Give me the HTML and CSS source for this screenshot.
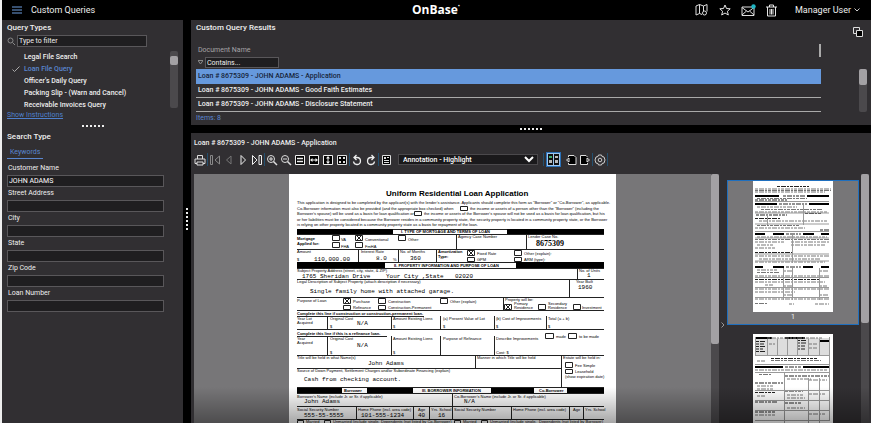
FILE: index.html
```
<!DOCTYPE html>
<html lang="en">
<head>
    <meta charset="UTF-8">
    <meta name="viewport" content="width=device-width, initial-scale=1.0">
    <title>OnBase - Custom Queries</title>
    <link rel="stylesheet" href="styles.css">
</head>
<body>
    <header class="topbar">
        <div class="topbar-left">
            <button class="icon-btn menu-btn" aria-label="Menu">
                <svg width="10" height="8" viewBox="0 0 10 8" stroke="#6f9fe0"><path d="M0 1h10M0 4h10M0 7h10"/></svg>
            </button>
            <span class="page-name">Custom Queries</span>
        </div>
        <h1 class="logo">OnBase<sup>·</sup></h1>
        <div class="topbar-right">
            <button class="icon-btn" aria-label="Map">
                <svg width="14" height="14" viewBox="0 0 14 14" fill="none" stroke="#ddd"><path d="M1 3l3.500-1.500 4 1.500L12 1.500v7M1 3v9l3.500-1.500L7 11.500M4.500 1.500v9M8.500 3v5"/><circle cx="9.500" cy="10" r="2"/></svg>
            </button>
            <button class="icon-btn" aria-label="Favorites">
                <svg width="12" height="12" viewBox="0 0 12 12" fill="none" stroke="#e6e6e6"><path d="M6 1l1.500 3.500 3.700.3-2.800 2.500.9 3.700L6 9l-3.300 2 .9-3.700L.8 4.800l3.700-.3z"/></svg>
            </button>
            <button class="icon-btn" aria-label="Mail">
                <svg width="15" height="13" viewBox="0 0 15 13" fill="none" stroke="#ddd"><path d="M1 3h12v8.500H1zM1 3.500l6 4.500 6-4.500M1 11l4.500-4M13 11L8.500 7"/><circle cx="12.500" cy="2.500" r="2.200" fill="#1fb5c4" stroke="none"/></svg>
            </button>
            <button class="icon-btn" aria-label="Trash">
                <svg width="11" height="13" viewBox="0 0 11 13" fill="none" stroke="#e6e6e6"><path d="M0 3h11M3.500 3V1h4v2M1.500 3v9h8V3M4 5v5.500M5.500 5v5.500M7 5v5.500"/></svg>
            </button>
            <button class="user-btn">Manager User
                <svg width="6" height="4" viewBox="0 0 6 4" fill="none" stroke="#ccc"><path d="M.5.5L3 3 5.500.5"/></svg>
            </button>
        </div>
    </header>

    <div class="workspace">
        <aside class="sidebar">
            <h2 class="heading">Query Types</h2>
            <div class="filter">
                <svg width="8" height="9" viewBox="0 0 8 9" fill="none" stroke="#888"><circle cx="3.500" cy="3.500" r="2.500"/><path d="M5.500 5.500L8 8"/></svg>
                <input class="field" type="text" aria-label="Filter query types" placeholder="Type to filter">
            </div>
            <div class="query-box">
                <ul class="query-list">
                    <li>Legal File Search</li>
                    <li class="selected">
                        <svg class="check" width="8" height="7" viewBox="0 0 8 7" fill="none" stroke="#aaa"><path d="M.5 3.500l2 2L7.500.5"/></svg>Loan File Query</li>
                    <li>Officer's Daily Query</li>
                    <li>Packing Slip - (Warn and Cancel)</li>
                    <li>Receivable Invoices Query</li>
                </ul>
                <div class="scroll query-scroll"><div class="thumb"></div></div>
            </div>
            <a class="instructions" href="#">Show Instructions</a>
            <div class="grip"></div>
            <h2 class="heading">Search Type</h2>
            <nav class="tabs"><a class="tab" href="#">Keywords</a></nav>
            <form class="keywords">
                <label for="customer">Customer Name</label>
                <input class="field" id="customer" type="text" value="JOHN ADAMS">
                <label for="street">Street Address</label>
                <input class="field" id="street" type="text">
                <label for="city">City</label>
                <input class="field" id="city" type="text">
                <label for="state">State</label>
                <input class="field" id="state" type="text">
                <label for="zip">Zip Code</label>
                <input class="field" id="zip" type="text">
                <label for="loan">Loan Number</label>
                <input class="field" id="loan" type="text">
            </form>
        </aside>

        <div class="divider"><div class="grip vertical"></div></div>

        <main class="content">
            <section class="results">
                <div class="results-head">
                    <h2 class="heading">Custom Query Results</h2>
                    <button class="icon-btn" aria-label="Open in window">
                        <svg width="10" height="10" viewBox="0 0 10 10" stroke="#ddd"><path d="M.5.500h6v6h-6z" fill="none"/><path d="M3.500 3.500h6v6h-6z" fill="#000"/></svg>
                    </button>
                </div>
                <div class="results-body">
                    <div class="results-main">
                        <div class="column-head">
                            <span>Document Name</span>
                            <span class="column-edge"></span>
                        </div>
                        <div class="column-filter">
                            <svg width="5" height="5" viewBox="0 0 5 5" fill="none" stroke="#888"><path d="M0 .5h5L2.500 4z"/></svg>
                            <input class="field" type="text" aria-label="Filter document name" placeholder="Contains...">
                        </div>
                        <table class="docs">
                            <tbody>
                                <tr class="active"><td>Loan # 8675309 - JOHN ADAMS - Application</td></tr>
                                <tr><td>Loan # 8675309 - JOHN ADAMS - Good Faith Estimates</td></tr>
                                <tr><td>Loan # 8675309 - JOHN ADAMS - Disclosure Statement</td></tr>
                            </tbody>
                        </table>
                    </div>
                    <div class="scroll docs-scroll"><div class="thumb"></div></div>
                </div>
                <div class="count">Items: 8</div>
            </section>

            <div class="splitter"><div class="grip"></div></div>

            <section class="document">
                <h2 class="doc-title">Loan # 8675309 - JOHN ADAMS - Application</h2>
                <div class="toolbar">
                    <button class="icon-btn" aria-label="Print"><svg width="12" height="12" viewBox="0 0 12 12" fill="none" stroke="#ddd"><path d="M3.500 5V1.500h5V5M1 5h10v4.500H9M3 9.500H1V5M3 8h6v3H3z"/></svg></button>
                    <span class="sep"></span>
                    <button class="icon-btn dim" aria-label="First page"><svg width="12" height="12" viewBox="0 0 12 12" fill="none" stroke="#888"><path d="M1.500 1.500h2v9h-2zM10.500 2L6 6l4.500 4z"/></svg></button>
                    <button class="icon-btn dim" aria-label="Previous page"><svg width="12" height="12" viewBox="0 0 12 12" fill="none" stroke="#777"><path d="M8 2L3.500 6 8 10z"/></svg></button>
                    <button class="icon-btn" aria-label="Next page"><svg width="12" height="12" viewBox="0 0 12 12" fill="none" stroke="#eee"><path d="M4 1.500L8.500 6 4 10.500z"/></svg></button>
                    <button class="icon-btn" aria-label="Last page"><svg width="12" height="12" viewBox="0 0 12 12" fill="none" stroke="#eee"><path d="M1.500 1.500L6 6l-4.500 4.500zM8 1.500h2.500v9H8z"/></svg></button>
                    <span class="sep"></span>
                    <button class="icon-btn" aria-label="Zoom in"><svg width="12" height="12" viewBox="0 0 12 12" fill="none" stroke="#ddd"><circle cx="5" cy="5" r="3.500"/><path d="M3 5h4M5 3v4"/><path d="M7.500 7.500L11 11" stroke-width="1.500"/></svg></button>
                    <button class="icon-btn" aria-label="Zoom out"><svg width="12" height="12" viewBox="0 0 12 12" fill="none" stroke="#ddd"><circle cx="5" cy="5" r="3.500"/><path d="M3 5h4"/><path d="M7.500 7.500L11 11" stroke-width="1.500"/></svg></button>
                    <button class="icon-btn" aria-label="Actual size"><svg width="12" height="12" viewBox="0 0 12 12" fill="#000" stroke="#eee"><path d="M1.500 1.500h9v9h-9z"/><path d="M3 4.500h6M3 7.500h6" stroke-width="1.500"/></svg></button>
                    <button class="icon-btn" aria-label="Fit width"><svg width="12" height="12" viewBox="0 0 12 12" fill="#000" stroke="#eee"><path d="M1.500 1.500h9v9h-9zM3 6h6"/><path d="M2 6l2.500-2v4zM10 6L7.500 4v4z" fill="#eee" stroke="none"/></svg></button>
                    <button class="icon-btn" aria-label="Fit height"><svg width="12" height="12" viewBox="0 0 12 12" fill="#000" stroke="#eee"><path d="M1.500 1.500h9v9h-9zM6 3v6"/><path d="M6 2l2 2.500H4zM6 10l2-2.500H4z" fill="#eee" stroke="none"/></svg></button>
                    <button class="icon-btn" aria-label="Fit window"><svg width="12" height="12" viewBox="0 0 12 12" fill="#000" stroke="#ddd"><path d="M1.500 1.500h9v9h-9z"/><path d="M3 3h2v2H3zM7 3h2v2H7zM3 7h2v2H3zM7 7h2v2H7z" fill="#ddd" stroke="none"/></svg></button>
                    <span class="sep"></span>
                    <button class="icon-btn" aria-label="Rotate left"><svg width="12" height="12" viewBox="0 0 12 12" fill="none" stroke="#eee" stroke-width="1.300"><path d="M3 3.500h3a3.500 3.500 0 1 1-3.500 4M5.500 1L3 3.500 5.500 6"/></svg></button>
                    <button class="icon-btn" aria-label="Rotate right"><svg width="12" height="12" viewBox="0 0 12 12" fill="none" stroke="#eee" stroke-width="1.300"><path d="M9 3.500H6a3.500 3.500 0 1 0 3.500 4M6.500 1L9 3.500 6.500 6"/></svg></button>
                    <span class="sep"></span>
                    <button class="icon-btn" aria-label="Notes"><svg width="12" height="12" viewBox="0 0 12 12" fill="#000" stroke="#ddd"><path d="M2.500 1.500h8v9h-8zM4 6.500h5M4 8.500h5M7 3.500h2"/><path d="M4 3h2v2H4z" fill="#ddd" stroke="none"/></svg></button>
                    <select class="annotation" aria-label="Annotation type">
                        <option>Annotation - Highlight</option>
                    </select>
                    <span class="sep"></span>
                    <button class="icon-btn pressed" aria-label="Thumbnails"><svg width="11" height="11" viewBox="0 0 11 11" fill="#111"><path d="M0 0h5v11H0zM6 0h5v11H6z"/><path d="M1 2h3v2H1z" fill="#3fae6a"/><path d="M1 6h3v3H1zM7 2h3v2H7zM7 6h3v3H7z" fill="#bbb"/></svg></button>
                    <button class="icon-btn" aria-label="Previous document"><svg width="12" height="12" viewBox="0 0 12 12" fill="#000" stroke="#ddd"><path d="M3.500 3V1.500H9l2 2v7H3.500V9M4 4L1.500 6 4 8z"/></svg></button>
                    <button class="icon-btn" aria-label="Next document"><svg width="12" height="12" viewBox="0 0 12 12" fill="#000" stroke="#ddd"><path d="M8.500 3L7 1.500H1.500v9h7V9M8 4l2.500 2L8 8z"/></svg></button>
                    <span class="sep"></span>
                    <button class="icon-btn" aria-label="Settings"><svg width="12" height="12" viewBox="0 0 12 12" fill="none" stroke="#ccc"><path d="M4.500 1h3l.5 1.500 2 .5 1 3-1 3-2 .5-.5 1.500h-3L4 9.500 2 9 1 6l1-3 2-.5z"/><circle cx="6" cy="6" r="1.800"/></svg></button>
                    <span class="sep"></span>
                </div>

                <div class="viewer">
                    <div class="canvas">
                        <!-- Scanned loan application, page 1 -->
                        <svg class="scan" width="327" height="249" viewBox="0 0 327 249" role="img" aria-label="Uniform Residential Loan Application">
                            <rect width="327" height="249" fill="#fff"/>
                            <g class="rules">
                                <path d="M8 55.500h307M8 60.500h307M8 75.500h307M8 88.500h307M8 94.500h307M8 105.500h307M8 123.500h307M8 136.500h307M8 142.500h127M8 155.500h307M8 162.500h90M8 181.500h307M8 194.500h264M8 213.500h307M8 219.500h307M8 232.500h307M8 245.500h307"/>
                                <path d="M167.500 60v15M237.500 60v15M69.500 76v12M109.500 76v12M147.500 76v12M288.500 94v11M280.500 105v18M214.500 123v13M38.500 142v13M102.500 142v13M151.500 142v13M205.500 142v13M257.500 142v13M38.500 162v19M102.500 162v19M151.500 162v19M205.500 162v19M186.500 181v13M272.500 181v32M163.500 219v26M67.500 232v13M124.500 232v13M140.500 232v13M222.500 232v13M280.500 232v13M294.500 232v13"/>
                            </g>
                            <path d="M8 55h96v5H8zM218 55h97v5h-97zM8 88h88v6H8zM227 88h88v6h-88zM8 214h45v5H8zM78 214h46v5H78zM202 214h43v5h-43zM278 214h37v5h-37z"/>
                            <g class="boxes">
                                <path d="M43.500 61.500h7v5h-7zM43.500 68.500h7v5h-7zM66.500 61.500h7v5h-7zM66.500 68.500h7v5h-7zM109.500 61.500h7v5h-7zM171.500 32.500h7v4h-7zM125.500 37.500h7v4h-7z"/>
                                <path d="M178.500 76.500h7v5h-7zM178.500 83.500h7v4h-7zM225.500 76.500h7v5h-7zM225.500 83.500h7v4h-7z"/>
                                <path d="M54.500 124.500h7v5h-7zM54.500 131.500h7v4h-7zM89.500 124.500h7v5h-7zM89.500 131.500h7v4h-7zM151.500 124.500h7v5h-7zM215.500 130.500h7v5h-7zM249.500 130.500h7v5h-7zM284.500 130.500h7v5h-7z"/>
                                <path d="M256.500 159.500h8v5h-8zM279.500 159.500h8v5h-8zM276.500 188.500h7v5h-7zM276.500 195.500h7v4h-7zM8.500 246.500h6v5h-6zM35.500 246.500h6v5h-6zM165.500 246.500h6v5h-6zM192.500 246.500h6v5h-6z"/>
                                <path d="M68 62l4 4M72 62l-4 4M180 77l4 4M184 77l-4 4M56 125l4 4M60 125l-4 4M217 131l4 4M221 131l-4 4"/>
                            </g>
                            <text class="form-title" x="97" y="22">Uniform Residential Loan Application</text>
                            <g class="print">
                                <text x="8" y="30">This application is designed to be completed by the applicant(s) with the lender's assistance. Applicants should complete this form as "Borrower" or "Co-Borrower", as applicable.</text>
                                <text x="8" y="36">Co-Borrower information must also be provided (and the appropriate box checked) when</text>
                                <text x="181" y="36">the income or assets of a person other than the "Borrower" (including the</text>
                                <text x="8" y="41">Borrower's spouse) will be used as a basis for loan qualification or</text>
                                <text x="135" y="41">the income or assets of the Borrower's spouse will not be used as a basis for loan qualification, but his</text>
                                <text x="8" y="47">or her liabilities must be considered because the Borrower resides in a community property state, the security property is located in a community property state, or the Borrower</text>
                                <text x="8" y="52">is relying on other property located in a community property state as a basis for repayment of the loan.</text>
                                <text x="52" y="67">VA</text><text x="52" y="74">FHA</text><text x="76" y="67">Conventional</text><text x="76" y="74">FmHA</text><text x="119" y="67">Other:</text>
                                <text x="169" y="64">Agency Case Number</text><text x="239" y="64">Lender Case No.</text>
                                <text x="8" y="79">Amount</text><text x="8" y="87">$</text><text x="72" y="79">Interest Rate</text><text x="104" y="87">%</text><text x="111" y="79">No. of Months</text>
                                <text x="188" y="81">Fixed Rate</text><text x="188" y="87">GPM</text><text x="235" y="81">Other (explain):</text><text x="235" y="87">ARM (type):</text>
                                <text x="8" y="98">Subject Property Address (street, city, state, &amp; ZIP)</text><text x="290" y="98">No. of Units</text>
                                <text x="8" y="109">Legal Description of Subject Property (attach description if necessary)</text><text x="287" y="109">Year Built</text>
                                <text x="8" y="128">Purpose of Loan</text><text x="64" y="129">Purchase</text><text x="64" y="135">Refinance</text><text x="99" y="129">Construction</text><text x="99" y="135">Construction-Permanent</text>
                                <text x="161" y="129">Other (explain)</text><text x="216" y="127">Property will be:</text><text x="225" y="131">Primary</text><text x="225" y="135">Residence</text><text x="259" y="131">Secondary</text><text x="259" y="135">Residence</text><text x="293" y="135">Investment</text>
                                <text x="8" y="146">Year Lot</text><text x="8" y="150">Acquired</text><text x="41" y="146">Original Cost</text><text x="41" y="154">$</text><text x="104" y="146">Amount Existing Liens</text><text x="104" y="154">$</text><text x="154" y="146">(a) Present Value of Lot</text><text x="154" y="154">$</text><text x="207" y="146">(b) Cost of Improvements</text><text x="207" y="154">$</text><text x="259" y="146">Total (a + b)</text><text x="259" y="154">$</text>
                                <text x="8" y="166">Year</text><text x="8" y="170">Acquired</text><text x="41" y="166">Original Cost</text><text x="41" y="180">$</text><text x="104" y="166">Amount Existing Liens</text><text x="104" y="180">$</text><text x="154" y="166">Purpose of Refinance</text><text x="207" y="166">Describe Improvements</text><text x="267" y="164">made</text><text x="290" y="164">to be made</text><text x="207" y="180">Cost: $</text>
                                <text x="8" y="185">Title will be held in what Name(s)</text><text x="188" y="185">Manner in which Title will be held</text><text x="274" y="185">Estate will be held in:</text>
                                <text x="286" y="193">Fee Simple</text><text x="286" y="199">Leasehold</text><text x="276" y="204">(show expiration date)</text>
                                <text x="8" y="198">Source of Down Payment, Settlement Charges and/or Subordinate Financing (explain)</text>
                                <text x="8" y="224">Borrower's Name (include Jr. or Sr. if applicable)</text><text x="165" y="224">Co-Borrower's Name (include Jr. or Sr. if applicable)</text>
                                <text x="8" y="237">Social Security Number</text><text x="69" y="237">Home Phone (incl. area code)</text><text x="129" y="237">Age</text><text x="142" y="237">Yrs. School</text>
                                <text x="165" y="237">Social Security Number</text><text x="224" y="237">Home Phone (incl. area code)</text><text x="284" y="237">Age</text><text x="296" y="237">Yrs. School</text>
                                <text x="17" y="249">Married</text><text x="44" y="249">Unmarried (include single,</text><text x="92" y="249">Dependents (not listed by Co-Borrower)</text>
                                <text x="174" y="249">Married</text><text x="201" y="249">Unmarried (include single,</text><text x="250" y="249">Dependents (not listed by Borrower)</text>
                            </g>
                            <g class="print bold">
                                <text x="8" y="66">Mortgage</text><text x="8" y="71">Applied for:</text><text x="149" y="79">Amortization</text><text x="149" y="84">Type:</text>
                                <text x="8" y="141">Complete this line if construction or construction-permanent loan.</text>
                                <text x="8" y="161">Complete this line if this is a refinance loan.</text>
                                <text x="55" y="218">Borrower</text><text x="250" y="218">Co-Borrower</text>
                                <text x="112" y="59">I. TYPE OF MORTGAGE AND TERMS OF LOAN</text>
                                <text x="105" y="93">II. PROPERTY INFORMATION AND PURPOSE OF LOAN</text>
                                <text x="133" y="218">III. BORROWER INFORMATION</text>
                            </g>
                            <text class="case-no" x="247" y="72">8675309</text>
                            <g class="typed">
                                <text x="25" y="87">110,000.00</text><text x="87" y="86">8.0</text><text x="121" y="86">360</text>
                                <text x="13" y="104">1765 Sheridan Drive</text><text x="97" y="104">Your City ,State</text><text x="166" y="104">02020</text><text x="298" y="103">1</text>
                                <text x="21" y="119">Single family home with attached garage.</text><text x="289" y="115">1960</text>
                                <text x="68" y="151">N/A</text><text x="68" y="173">N/A</text><text x="79" y="191">John Adams</text>
                                <text x="15" y="207">Cash from checking account.</text>
                                <text x="15" y="229">John Adams</text><text x="175" y="229">N/A</text>
                                <text x="15" y="243">555-55-5555</text><text x="72" y="243">101-555-1234</text><text x="129" y="243">40</text><text x="149" y="243">16</text>
                            </g>
                        </svg>
                    </div>
                    <div class="scroll canvas-scroll"><div class="thumb"></div></div>
                    <button class="collapse" aria-label="Collapse thumbnails">
                        <svg width="4" height="6" viewBox="0 0 4 6" fill="none" stroke="#999"><path d="M.5.5L3 3 .5 5.500"/></svg>
                    </button>
                    <div class="pages">
                        <button class="page current">
                            <svg width="80" height="131" viewBox="0 0 80 131">
                                <rect width="80" height="131" fill="#fff"/>
                                <path d="M2 14h24v2H2zM54 14h22v2H54zM2 22h22v2H2zM56 22h20v2H56zM2 52h10v2H2zM20 52h11v2H20zM50 52h11v2H50zM68 52h8v2h-8zM2 85h8v2H2zM20 85h11v2H20zM50 85h10v2H50zM68 85h8v2h-8z"/>
                                <path class="ink strong" d="M24 5.500h32M2 19h32M3 34h31M2 37.500h26M67 49h9M52 32.500h17M30 15h22M26 23h28M33 53h15M33 86h15M2 71.500h38M2 98.500h65"/>
                                <path class="ink" d="M2 8h76M2 9.500h76M2 11h70M4 17.500h50M4 26h40M8 28.500h62M2 31h72M6 40h68M4 44.500h42M2 47h50M4 56h70M2 58.500h74M2 61h30M38 61h38M4 64h16M38 64h34M2 67h20M2 75h74M6 78h62M2 81h70M4 89h20M4 91.500h22M30 90h10M66 90h10M2 95h74M2 101h70M12 104h8M30 105h10M66 105h8M2 108h74M2 111h40M30 114h10M66 114h10M2 118h74M2 122.500h12M36 123h5M62 123h14"/>
                                <path class="hair" d="M2 20.500h74M2 32h74M2 43h74M2 50.500h74M2 57h74M2 73h74M2 80h74M2 96.500h74M2 106.500h74M2 116.500h74M39.500 54v28M39.500 87v32M30.500 87v32M66.500 87v32M14.500 34v10M50.500 24v20"/>
                            </svg>
                            <span>1</span>
                        </button>
                        <button class="page">
                            <svg width="80" height="131" viewBox="0 0 80 131">
                                <rect width="80" height="131" fill="#fff"/>
                                <path d="M2 4h74v17H2z" fill="#ddd"/>
                                <path d="M3 3h16v2H3zM32 3h20v2H32zM66 6h10v2H66zM2 32h28v2H2zM50 32h26v2H50z"/>
                                <path class="ink strong" d="M3 7.500h10M3 10h8M3 12.500h9M3 15h7M3 17.500h10M44 6.500h9M44 9h9M44 12h8M44 15h8M32 33h16M18 24.500h46M2 49h28M32 42h44M2 58.500h20M2 68h22M2 78h20M32 57h18M32 69h16"/>
                                <path class="ink" d="M14 4h56M16 10h6M56 10h8M56 14h8M4 27h8M18 26.500h50M2 36h72M6 40.500h12M34 45h24M56 46h18M4 52h16M4 55h16M34 61h16M56 60h16M34 64h18M4 62h8M34 74h18M2 81h20M56 80h16"/>
                                <path class="hair" d="M2.500 3v18M14.500 5v16M24.500 5v16M34.500 5v16M44.500 5v16M55.500 5v16M66.500 5v16M76.500 3v84M2 21.500h74M2 30.500h74M2 38.500h74M31.500 38v92M55.500 44v86M66.500 44v86M2 56.500h74M2 66.500h74M2 76.500h74M2 86.500h74"/>
                            </svg>
                        </button>
                    </div>
                    <div class="scroll pages-scroll"><div class="thumb"></div></div>
                </div>
            </section>
        </main>
    </div>
</body>
</html>
```

FILE: styles.css
```
* {
    box-sizing: border-box;
}
body {
    margin: 0;
    height: 100vh;
    display: flex;
    flex-direction: column;
    overflow: hidden;
    background-color: #000;
    border-left: 2px solid #eee;
    color: #eee;
    font-family: Roboto, Arial, sans-serif;
    font-size: 7px;
    line-height: 12px;
}
button, input, select {
    font: inherit;
    color: inherit;
}
button {
    padding: 0;
    border: 0;
    background: none;
    cursor: pointer;
}
svg {
    display: block;
}
.topbar {
    display: grid;
    grid-template-columns: 1fr auto 1fr;
    align-items: center;
    flex: none;
    height: 20px;
    padding: 0 11px 0 10px;
    font-size: 9px;
}
.topbar-left, .topbar-right {
    display: flex;
    align-items: center;
}
.topbar-left {
    gap: 9px;
}
.topbar-right {
    justify-content: flex-end;
    gap: 10px;
}
.logo {
    margin: 0;
    color: #fff;
    font-family: "Open Sans", sans-serif;
    font-size: 12px;
    font-weight: 700;
    line-height: 20px;
}
.logo sup {
    font-size: 8px;
    line-height: 1px;
}
.user-btn {
    display: flex;
    align-items: center;
    gap: 3px;
    margin-left: 8px;
}
.workspace {
    display: flex;
    flex: 1;
    min-height: 0;
}
.sidebar {
    flex: none;
    width: 181px;
    padding: 2px 5px;
    background-color: #312f32;
}
.heading {
    margin: 0;
    font-size: 8px;
    font-weight: 500;
    line-height: 12px;
}
.field {
    display: block;
    height: 12px;
    padding: 0 1px;
    border: 1px solid #59575a;
    border-radius: 0;
    background-color: #1f1e20;
    color: #fff;
    line-height: 10px;
    outline: none;
}
.field::placeholder {
    color: #eee;
}
.filter {
    display: flex;
    align-items: center;
    gap: 2px;
    margin-top: 1px;
}
.filter .field {
    width: 130px;
}
.query-box {
    display: flex;
    justify-content: space-between;
    margin-top: 4px;
}
.query-list {
    margin: 0;
    padding: 0 0 0 17px;
    list-style: none;
    font-weight: 500;
}
.query-list .selected {
    display: flex;
    align-items: center;
    gap: 4px;
    margin-left: -12px;
    color: #5a86cf;
}
.scroll {
    flex: none;
    width: 8px;
    background-color: #4b494c;
}
.scroll .thumb {
    background-color: #a3a1a4;
    border-radius: 2px;
}
.query-scroll {
    height: 57px;
    padding-top: 5px;
    border-radius: 2px;
}
.query-scroll .thumb {
    height: 9px;
}
.instructions {
    display: block;
    margin-top: -2px;
    color: #4f80cc;
}
.grip {
    width: 22px;
    height: 2px;
    margin: 4px auto;
    background: repeating-linear-gradient(to right, #eee 0 2px, transparent 2px 4px);
}
.grip.vertical {
    width: 2px;
    height: 22px;
    margin: 0 0 6px;
    background: repeating-linear-gradient(to bottom, #eee 0 2px, transparent 2px 4px);
}
.tabs {
    display: flex;
    margin-top: 4px;
}
.tab {
    padding: 0 3px;
    border-bottom: 1px solid #5a86cf;
    color: #5a86cf;
    line-height: 11px;
    text-decoration: none;
}
.keywords {
    width: 157px;
    margin-top: 3px;
}
.keywords label {
    display: block;
    padding-left: 1px;
    line-height: 13px;
}
.keywords .field {
    width: 100%;
}
.divider {
    display: flex;
    align-items: center;
    justify-content: center;
    flex: none;
    width: 8px;
}
.content {
    display: flex;
    flex: 1;
    flex-direction: column;
    min-width: 0;
}
.results {
    flex: none;
    padding: 2px 4px 1px 5px;
    background-color: #312f32;
}
.results-head {
    display: flex;
    justify-content: space-between;
    padding-right: 4px;
    height: 22px;
}
.results-head .icon-btn {
    align-self: flex-start;
    margin-top: 5px;
}
.results-body {
    display: flex;
    align-items: flex-end;
    gap: 38px;
}
.results-main {
    flex: 1;
}
.column-head {
    display: flex;
    justify-content: space-between;
    height: 12px;
    padding-left: 2px;
    color: #a5a3a6;
}
.column-edge {
    width: 2px;
    height: 13px;
    background-color: #aaa;
}
.column-filter {
    display: flex;
    align-items: center;
    gap: 2px;
    padding: 1px 2px;
}
.column-filter .field {
    width: 74px;
    height: 11px;
}
.docs {
    width: 100%;
    border-collapse: collapse;
}
.docs td {
    height: 14px;
    padding: 0 2px;
    border-bottom: 1px solid #aaa;
    font-weight: 500;
}
.docs .active td {
    background-color: #6699dd;
    border-bottom-color: #6699dd;
    color: #16243a;
}
.docs-scroll {
    height: 43px;
    border-radius: 2px;
}
.docs-scroll .thumb {
    height: 16px;
}
.count {
    color: #5a86cf;
}
.splitter {
    flex: none;
    height: 8px;
    padding-top: 3px;
}
.splitter .grip {
    margin: 0 auto;
}
.document {
    display: flex;
    flex: 1;
    flex-direction: column;
    min-height: 0;
    padding: 4px 2px 0 3px;
    background-color: #312f32;
}
.doc-title {
    margin: 0;
    font-size: 7px;
    font-weight: 500;
}
.toolbar {
    display: flex;
    align-items: center;
    gap: 2px;
    height: 22px;
    margin-bottom: 3px;
}
.sep {
    width: 1px;
    height: 13px;
    margin: 0 -1px;
    background-color: #24506f;
}
.annotation {
    width: 140px;
    height: 11px;
    margin: 0 4px;
    padding: 0;
    border: 1px solid #4b494c;
    border-radius: 0;
    background-color: #1a191b;
    color: #fff;
    font-weight: 500;
}
.pressed {
    padding: 1px;
    background-color: #9fc6ee;
    outline: 1px solid #2a71b8;
    margin: 0 3px 0 2px;
}
.viewer {
    position: relative;
    display: flex;
    flex: 1;
    min-height: 0;
    overflow: hidden;
}
/* shade along the bottom edge */
.viewer::after {
    content: "";
    position: absolute;
    left: 0;
    right: 0;
    bottom: 0;
    height: 36px;
    background: linear-gradient(transparent, rgba(0, 0, 0, 0.35));
    pointer-events: none;
}
.canvas {
    display: flex;
    flex: 1;
    justify-content: center;
    background-color: #777678;
}
.scan {
    flex: none;
}
.scan text {
    fill: #000;
}
.rules, .boxes {
    fill: none;
    stroke: #222;
    stroke-width: 1;
}
.form-title {
    font: bold 8px "Liberation Sans", Arial, sans-serif;
}
.print {
    font: 4px "Liberation Sans", Arial, sans-serif;
}
.print.bold {
    font-weight: bold;
}
.typed {
    font: 6px "Liberation Mono", "Courier New", monospace;
}
.case-no {
    font: bold 8px "Liberation Serif", "Times New Roman", serif;
}
.canvas-scroll .thumb {
    height: 170px;
}
.collapse {
    display: flex;
    align-items: center;
    flex: none;
    width: 8px;
    height: 302px;
    padding-left: 2px;
}
.pages {
    flex: none;
    width: 132px;
    margin-right: 2px;
    padding-top: 6px;
}
.page {
    display: flex;
    flex-direction: column;
    align-items: center;
    width: 100%;
    padding: 9px 0 0;
    color: #eee;
}
.page.current {
    height: 145px;
    padding-top: 0;
    border: 1px solid #1f6fbe;
    background-color: #777678;
}
.page span {
    line-height: 11px;
}
.pages-scroll .thumb {
    height: 149px;
}
.ink {
    fill: none;
    stroke: #777;
    stroke-width: 1;
    stroke-dasharray: 3 1 5 1 2 1;
}
.ink.strong {
    stroke: #222;
}
.hair {
    fill: none;
    stroke: #999;
    stroke-width: 1;
}
```
